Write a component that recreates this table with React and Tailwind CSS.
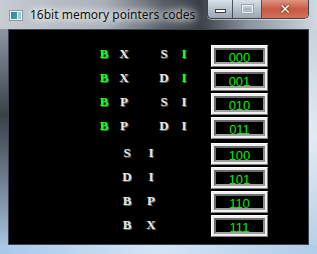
import React from 'react';

const G = 'g';
const W = 'w';

const topRows = [
  { cells: [['B', G], ['X', W], ['S', W], ['I', G]], code: '000' },
  { cells: [['B', G], ['X', W], ['D', W], ['I', G]], code: '001' },
  { cells: [['B', G], ['P', W], ['S', W], ['I', W]], code: '010' },
  { cells: [['B', G], ['P', W], ['D', W], ['I', W]], code: '011' },
];

const bottomRows = [
  { cells: ['S', 'I'], code: '100' },
  { cells: ['D', 'I'], code: '101' },
  { cells: ['B', 'P'], code: '110' },
  { cells: ['B', 'X'], code: '111' },
];

const Letter = ({ ch, green }) => (
  <span
    className={`w-[20px] text-center font-['Liberation_Serif',serif] font-bold text-[13px] leading-none ${
      green
        ? 'text-[#19ff19] [text-shadow:1px_1px_0_#3a7a3a]'
        : 'text-[#e6e6e6] [text-shadow:1px_1px_0_#6a6a6a]'
    }`}
  >
    {ch}
  </span>
);

const CodeBox = ({ code }) => (
  <div className="w-[57px] h-[22px] flex bg-[#efefef] border border-t-white border-l-white border-r-[#7e7e7e] border-b-[#7e7e7e] p-[2px]">
    <div className="flex-1 flex items-center justify-center bg-black border-2 border-t-[#6c6c6c] border-l-[#6c6c6c] border-r-[#8a8a8a] border-b-[#a0a0a0]">
      <span className="font-['Liberation_Sans',sans-serif] text-[13px] leading-none text-[#00f000] pt-[2px]">
        {code}
      </span>
    </div>
  </div>
);

const TitleIcon = () => (
  <svg width="14" height="11" viewBox="0 0 14 11">
    <defs>
      <linearGradient id="ti" x1="0" y1="0" x2="1" y2="1">
        <stop offset="0" stopColor="#3a78c8" />
        <stop offset="1" stopColor="#38b070" />
      </linearGradient>
    </defs>
    <rect x="0.5" y="0.5" width="13" height="10" fill="#eef4f8" stroke="#8a9aa8" />
    <rect x="2" y="2" width="6" height="7" fill="url(#ti)" />
    <rect x="9" y="2" width="3" height="7" fill="#9cc8e0" />
  </svg>
);

const CaptionButtons = () => (
  <div className="flex h-[19px] border border-t-0 border-[#3c4450] rounded-b-[5px] overflow-hidden shadow-[0_1px_0_rgba(255,255,255,0.5)]">
    <div className="w-[25px] flex items-center justify-center bg-gradient-to-b from-[#d8e0e8] via-[#b8c2cc] to-[#9aa6b2] border-r border-[#4a525c]">
      <div className="w-[11px] h-[4px] bg-white border border-[#3a4048] mt-[3px]" />
    </div>
    <div className="w-[29px] flex items-center justify-center bg-gradient-to-b from-[#d8e0e8] via-[#b8c2cc] to-[#9aa6b2] border-r border-[#4a525c]">
      <div className="w-[11px] h-[8px] border border-[#e8eef4] outline outline-1 outline-[#9aa4ae] flex items-center justify-center">
        <div className="w-[5px] h-[2px] border border-[#aab2bc]" />
      </div>
    </div>
    <div className="w-[46px] flex items-center justify-center bg-gradient-to-b from-[#e09484] via-[#c85a44] to-[#d47058]">
      <span className="font-['DejaVu_Sans',sans-serif] font-bold text-[14px] leading-none text-white [text-shadow:0_0_1px_#3a1810,0_0_2px_#3a1810]">
        ✕
      </span>
    </div>
  </div>
);

export default function App() {
  return (
    <div className="w-[317px] h-[254px] flex flex-col overflow-hidden bg-[#b4c0cc]">
      <div className="h-[29px] flex items-start bg-[linear-gradient(to_right,#c6ccd2_0%,#aab0b8_33%,#565c64_52%,#3a3e44_63%,#8a949e_78%,#d0d8e0_100%)]">
        <div className="ml-[9px] mt-[10px]">
          <TitleIcon />
        </div>
        <span className="ml-[7px] mt-[7px] font-['Noto_Sans',sans-serif] text-[12px] leading-[16px] text-[#111] [text-shadow:0_0_6px_#fff,0_0_10px_#fff,0_0_14px_#fff]">
          16bit memory pointers codes
        </span>
        <div className="ml-auto mr-[8px]">
          <CaptionButtons />
        </div>
      </div>
      <div className="flex h-[216px]">
        <div className="w-[8px] bg-gradient-to-b from-[#8e98a2] via-[#3a4048] via-40% to-[#a8c4e0]" />
        <div className="w-[301px] bg-black border border-[#3a4450] pt-[15px] flex flex-col">
          <div className="flex flex-col gap-[2px]">
            {topRows.map((row) => (
              <div key={row.code} className="flex items-start h-[22px]">
                <div className="w-[202px] h-[22px] flex items-center pb-[6px] pl-[85px]">
                  <Letter ch={row.cells[0][0]} green={row.cells[0][1] === G} />
                  <Letter ch={row.cells[1][0]} green={row.cells[1][1] === G} />
                  <span className="w-[20px]" />
                  <Letter ch={row.cells[2][0]} green={row.cells[2][1] === G} />
                  <Letter ch={row.cells[3][0]} green={row.cells[3][1] === G} />
                </div>
                <CodeBox code={row.code} />
              </div>
            ))}
          </div>
          <div className="flex flex-col gap-[2px] mt-[4px]">
            {bottomRows.map((row) => (
              <div key={row.code} className="flex items-start h-[22px]">
                <div className="w-[202px] h-[22px] flex items-center pb-[4px] pl-[108px] gap-[4px]">
                  <Letter ch={row.cells[0]} />
                  <Letter ch={row.cells[1]} />
                </div>
                <CodeBox code={row.code} />
              </div>
            ))}
          </div>
        </div>
        <div className="w-[8px] bg-gradient-to-b from-[#c8d2dc] via-[#e4eaf0] to-[#b8d0e8]" />
      </div>
      <div className="h-[9px] bg-gradient-to-r from-[#a8c8e8] via-[#d4e4f4] to-[#b0cce8]" />
    </div>
  );
}
